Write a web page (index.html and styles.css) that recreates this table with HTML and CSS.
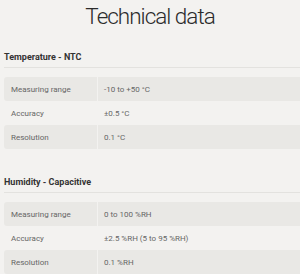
FILE: index.html
```html
<!DOCTYPE html>
<html>
<head>
<meta charset="utf-8">
<link rel="stylesheet" href="styles.css">
</head>
<body>
<h1 class="title">Technical data</h1>
<section class="spec">
  <h2 class="spec-head">Temperature - NTC</h2>
  <div class="spec-table">
    <div class="row"><div class="cell label">Measuring range</div><div class="cell value">-10 to +50 °C</div></div>
    <div class="row"><div class="cell label">Accuracy</div><div class="cell value">±0.5 °C</div></div>
    <div class="row"><div class="cell label">Resolution</div><div class="cell value">0.1 °C</div></div>
  </div>
</section>
<section class="spec">
  <h2 class="spec-head">Humidity - Capacitive</h2>
  <div class="spec-table">
    <div class="row"><div class="cell label">Measuring range</div><div class="cell value">0 to 100 %RH</div></div>
    <div class="row"><div class="cell label">Accuracy</div><div class="cell value">±2.5 %RH (5 to 95 %RH)</div></div>
    <div class="row"><div class="cell label">Resolution</div><div class="cell value">0.1 %RH</div></div>
  </div>
</section>
</body>
</html>
```
FILE: styles.css
```css
html, body {
  margin: 0;
  padding: 0;
  background: #f3f2f0;
}
body {
  font-family: Roboto, "Liberation Sans", sans-serif;
  color: #333;
  padding: 0 0 0 4px;
  overflow: hidden;
}
.title {
  margin: 2px 0 0 -4px;
  font-size: 22.5px;
  line-height: 28px;
  font-weight: 300;
  letter-spacing: -1px;
  text-align: center;
  color: #2b2b2b;
}
.spec {
  margin-top: 21px;
}
.spec + .spec {
  margin-top: 27px;
}
.spec-head {
  margin: 0;
  font-size: 9px;
  line-height: 12px;
  font-weight: 700;
  color: #333;
  padding-bottom: 4px;
  border-bottom: 1px solid #e3e2df;
}
.spec-table {
  margin-top: 9px;
  display: flex;
  flex-direction: column;
}
.row {
  display: grid;
  grid-template-columns: 93px 1fr;
  column-gap: 1px;
  height: 24px;
}
.row:nth-child(odd) .cell {
  background: #e9e8e5;
}
.row:nth-child(odd) .label {
  border-radius: 3px 0 0 3px;
}
.cell {
  display: flex;
  align-items: center;
  font-size: 8px;
  color: #666;
}
.label {
  padding-left: 7px;
}
.value {
  padding-left: 6px;
}
```
